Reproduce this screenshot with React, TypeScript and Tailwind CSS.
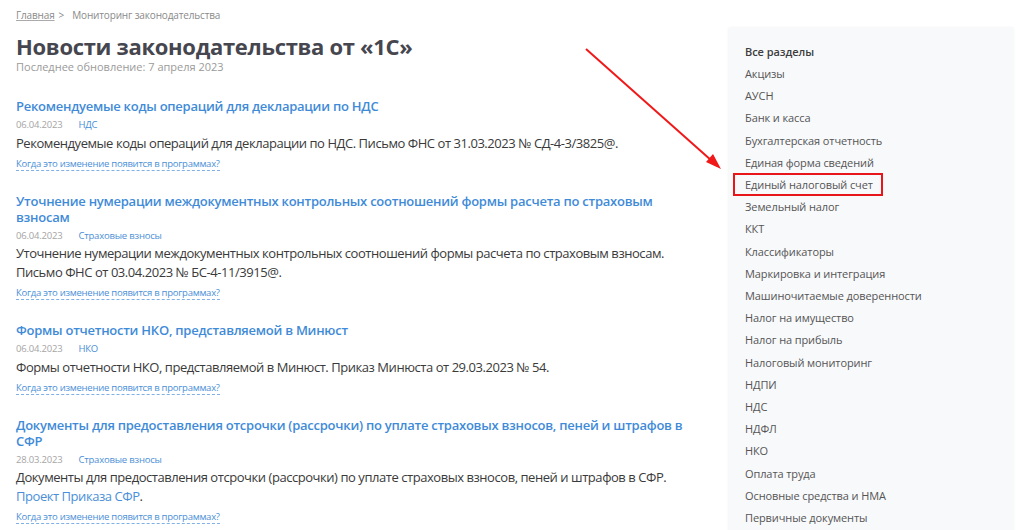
import React from "react";

type News = {
  title: string;
  date: string;
  tag: string;
  body: React.ReactNode;
};

const news: News[] = [
  {
    title: "Рекомендуемые коды операций для декларации по НДС",
    date: "06.04.2023",
    tag: "НДС",
    body: "Рекомендуемые коды операций для декларации по НДС. Письмо ФНС от 31.03.2023 № СД-4-3/3825@.",
  },
  {
    title: "Уточнение нумерации междокументных контрольных соотношений формы расчета по страховым взносам",
    date: "06.04.2023",
    tag: "Страховые взносы",
    body: "Уточнение нумерации междокументных контрольных соотношений формы расчета по страховым взносам. Письмо ФНС от 03.04.2023 № БС-4-11/3915@.",
  },
  {
    title: "Формы отчетности НКО, представляемой в Минюст",
    date: "06.04.2023",
    tag: "НКО",
    body: "Формы отчетности НКО, представляемой в Минюст. Приказ Минюста от 29.03.2023 № 54.",
  },
  {
    title: "Документы для предоставления отсрочки (рассрочки) по уплате страховых взносов, пеней и штрафов в СФР",
    date: "28.03.2023",
    tag: "Страховые взносы",
    body: (
      <>
        Документы для предоставления отсрочки (рассрочки) по уплате страховых взносов, пеней и штрафов в СФР.{" "}
        <a className="text-[#4a8fd8]">Проект Приказа СФР</a>.
      </>
    ),
  },
];

const sections = [
  "Акцизы",
  "АУСН",
  "Банк и касса",
  "Бухгалтерская отчетность",
  "Единая форма сведений",
  "Единый налоговый счет",
  "Земельный налог",
  "ККТ",
  "Классификаторы",
  "Маркировка и интеграция",
  "Машиночитаемые доверенности",
  "Налог на имущество",
  "Налог на прибыль",
  "Налоговый мониторинг",
  "НДПИ",
  "НДС",
  "НДФЛ",
  "НКО",
  "Оплата труда",
  "Основные средства и НМА",
  "Первичные документы",
];

export default function App() {
  return (
    <div className="relative h-[530px] w-[1024px] overflow-hidden bg-white font-['Open_Sans',sans-serif]">
      <div className="flex">
        <main className="w-[704px] shrink-0 pl-4 pt-2">
          <div className="flex items-center gap-1 text-[10px] leading-[14px] tracking-[-0.15px] text-[#8a8a8a]">
            <a className="underline decoration-[#aaa]">Главная</a>
            <span>&gt;</span>
            <span className="ml-1">Мониторинг законодательства</span>
          </div>
          <h1 className="mt-[11px] text-[22px] font-bold leading-[26px] tracking-[-0.3px] text-[#46464f]">
            Новости законодательства от «1С»
          </h1>
          <p className="mt-[1px] text-[11px] leading-[14px] text-[#9a9a9a]">Последнее обновление: 7 апреля 2023</p>

          <div className="mt-6 space-y-[22px]">
            {news.map((n) => (
              <article key={n.title}>
                <h2 className="text-[13px] font-semibold leading-4 tracking-[-0.25px] text-[#3f8bd8]">{n.title}</h2>
                <div className="mt-1 flex gap-4 text-[9.5px] leading-[14px] tracking-[-0.2px]">
                  <span className="text-[#a5a5a5]">{n.date}</span>
                  <span className="text-[#4a8fd8]">{n.tag}</span>
                </div>
                <p className="mt-[1.5px] text-[13px] leading-[19px] tracking-[-0.45px] text-[#3a3a3a]">{n.body}</p>
                <a className="mt-1 block w-fit border-b border-dashed border-[#7fb0e6] text-[9.5px] leading-[13px] tracking-[-0.25px] text-[#4a8fd8]">
                  Когда это изменение появится в программах?
                </a>
              </article>
            ))}
          </div>
        </main>

        <aside className="ml-[25px] mt-[28px] w-[284px] shrink-0 bg-[#f8f9fb] pb-4 pl-4 pt-[13px] shadow-[0_0_3px_rgba(0,0,0,0.08)]">
          <p className="text-[11px] font-semibold leading-[22px] tracking-[-0.05px] text-[#3d3d3d]">Все разделы</p>
          <ul>
            {sections.map((s) => (
              <li key={s} className="text-[11px] leading-[22.2px] tracking-[-0.1px] text-[#555]">
                {s === "Единый налоговый счет" ? (
                  <span className="relative">
                    {s}
                    <span className="absolute -left-3 -right-[10px] -top-[4px] -bottom-[4px] border-2 border-[#e8151b]" />
                  </span>
                ) : (
                  s
                )}
              </li>
            ))}
          </ul>
        </aside>
      </div>

      <svg className="pointer-events-none absolute left-0 top-0" width="1024" height="530">
        <line x1="586" y1="49" x2="712" y2="161" stroke="#f01818" strokeWidth="2" />
        <polygon points="721,169 706,162 713,154" fill="#f01818" />
      </svg>
    </div>
  );
}
